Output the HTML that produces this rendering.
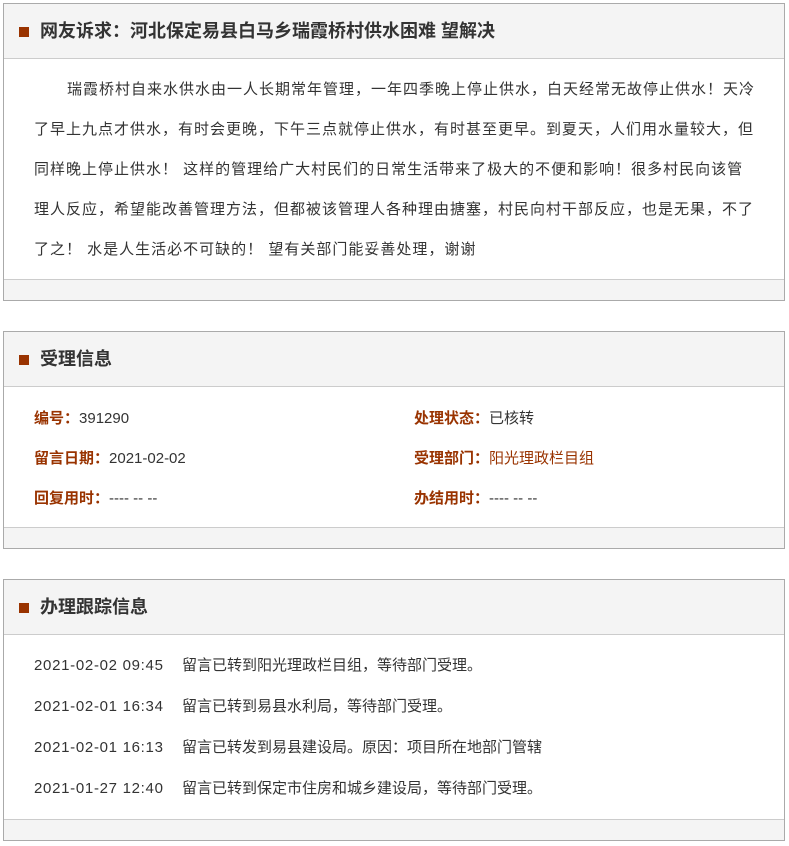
<!DOCTYPE html>
<html><head><meta charset="utf-8"><style>
*{margin:0;padding:0;box-sizing:border-box}
body{width:789px;height:846px;background:#fff;font-family:"Liberation Sans","Noto Sans CJK SC",sans-serif;color:#333;position:relative}
.p{position:absolute;left:3px;width:782px;border:1px solid #aaa;background:#fff}
.h{height:55px;background:#f4f4f4;border-bottom:1px solid #ccc;position:relative;font-size:18px;font-weight:bold;color:#333;line-height:55px;padding-left:36px}
.h:before{content:"";position:absolute;left:15px;top:23px;width:10px;height:10px;background:#993300}
.f{height:21px;background:#f4f4f4;border-top:1px solid #ccc}
.txt{padding:11px 28px 0 30px;height:220px;font-size:15px;line-height:40px;text-indent:33px;letter-spacing:1px}
.row{position:absolute;font-size:15px}
.l{color:#993300;font-weight:bold}
.r{font-size:15px;line-height:41px;padding-left:30px}
.r span{display:inline-block;width:148px;letter-spacing:0.7px}
</style></head><body>
<div class="p" style="top:3px;height:298px">
<div class="h">网友诉求：河北保定易县白马乡瑞霞桥村供水困难 望解决</div>
<div class="txt">瑞霞桥村自来水供水由一人长期常年管理，一年四季晚上停止供水，白天经常无故停止供水！天冷了早上九点才供水，有时会更晚，下午三点就停止供水，有时甚至更早。到夏天，人们用水量较大，但同样晚上停止供水！ 这样的管理给广大村民们的日常生活带来了极大的不便和影响！很多村民向该管理人反应，希望能改善管理方法，但都被该管理人各种理由搪塞，村民向村干部反应，也是无果，不了了之！ 水是人生活必不可缺的！ 望有关部门能妥善处理，谢谢</div>
<div class="f"></div>
</div>
<div class="p" style="top:331px;height:218px">
<div class="h">受理信息</div>
<div style="height:140px;position:relative">
<div class="row" style="left:30px;top:20px"><span class="l">编号：</span>391290</div>
<div class="row" style="left:410px;top:20px"><span class="l">处理状态：</span>已核转</div>
<div class="row" style="left:30px;top:60px"><span class="l">留言日期：</span>2021-02-02</div>
<div class="row" style="left:410px;top:60px"><span class="l">受理部门：</span><span style="color:#993300">阳光理政栏目组</span></div>
<div class="row" style="left:30px;top:100px"><span class="l">回复用时：</span>---- -- --</div>
<div class="row" style="left:410px;top:100px"><span class="l">办结用时：</span>---- -- --</div>
</div>
<div class="f"></div>
</div>
<div class="p" style="top:579px;height:262px">
<div class="h">办理跟踪信息</div>
<div style="height:184px;padding-top:10px">
<div class="r"><span>2021-02-02 09:45</span>留言已转到阳光理政栏目组，等待部门受理。</div>
<div class="r"><span>2021-02-01 16:34</span>留言已转到易县水利局，等待部门受理。</div>
<div class="r"><span>2021-02-01 16:13</span>留言已转发到易县建设局。原因：项目所在地部门管辖</div>
<div class="r"><span>2021-01-27 12:40</span>留言已转到保定市住房和城乡建设局，等待部门受理。</div>
</div>
<div class="f"></div>
</div>
</body></html>
